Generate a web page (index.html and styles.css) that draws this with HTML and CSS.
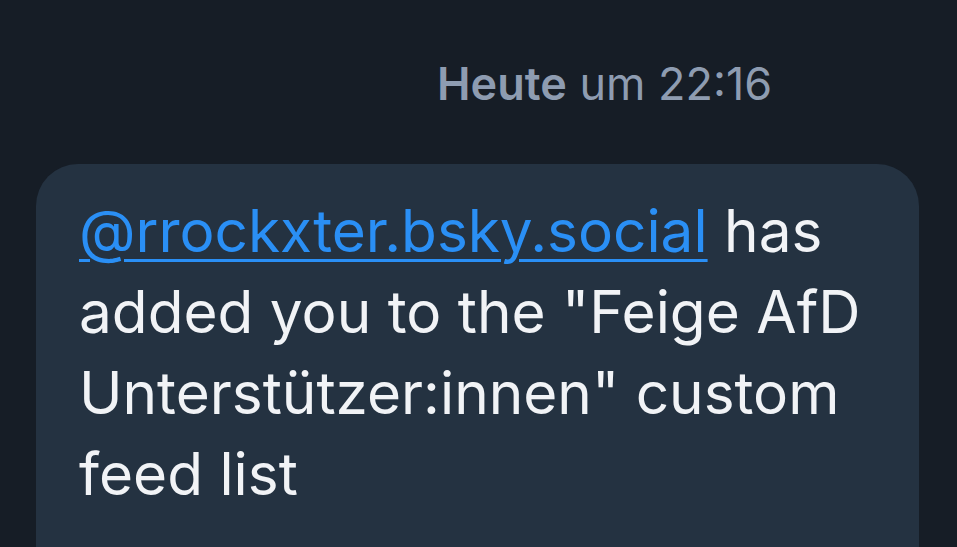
FILE: index.html
```html
<!DOCTYPE html>
<html>
<head>
<meta charset="utf-8">
<link rel="stylesheet" href="styles.css">
</head>
<body>
<div class="screen">
  <div class="stamp"><b>Heute</b> um 22:16</div>
  <div class="bubble">
    <p class="msg"><a href="#" class="mention">@rrockxter.bsky.social</a> has added you to the "Feige AfD Unterstützer:innen" custom feed list</p>
  </div>
</div>
</body>
</html>
```
FILE: styles.css
```css
html, body {
  margin: 0;
  padding: 0;
  background: #161d26;
  overflow: hidden;
}
.screen {
  width: 957px;
  height: 547px;
  display: flex;
  flex-direction: column;
  font-family: Inter, "Noto Sans", sans-serif;
}
.stamp {
  padding-top: 58px;
  padding-left: 437px;
  font-size: 45px;
  line-height: 52px;
  color: #8e9cb1;
}
.stamp b {
  font-weight: 600;
}
.bubble {
  margin-top: 54px;
  margin-left: 36px;
  width: 883px;
  flex: 1;
  background: #243241;
  border-radius: 42px 42px 0 0;
  padding: 26px 43px 0;
  box-sizing: border-box;
}
.msg {
  margin: 0;
  font-size: 58.5px;
  line-height: 81px;
  color: #f1f3f6;
}
.mention {
  color: #2a8ff5;
  text-decoration: underline;
  text-decoration-thickness: 3px;
  text-underline-offset: 7px;
}
```
